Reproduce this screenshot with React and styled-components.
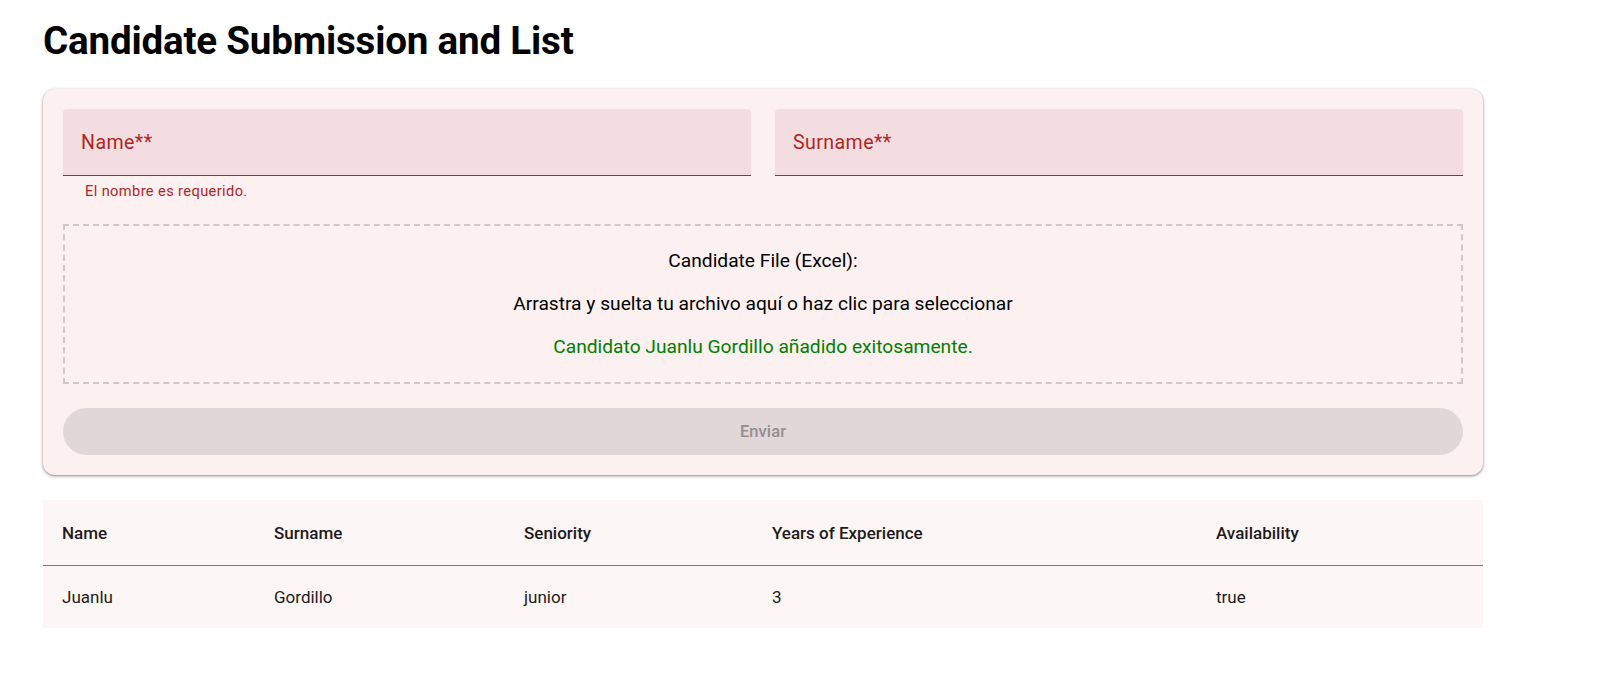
import React from 'react';
import styled, { createGlobalStyle } from 'styled-components';

const GlobalStyle = createGlobalStyle`
    body {
        margin: 0;
        background: #fff;
        font-family: Roboto, "Liberation Sans", sans-serif;
        color: #1d1b20;
    }
`;

const Page = styled.div`
    width: 1440px;
    padding: 16px 0 0 43px;
`;

const Title = styled.h1`
    margin: 0 0 23px;
    font-size: 38.6px;
    font-weight: 700;
    line-height: 50px;
    color: #000;
    letter-spacing: -0.2px;
`;

const Card = styled.form`
    background: #fdf0f0;
    border-radius: 12px;
    padding: 20px;
    display: flex;
    flex-direction: column;
    box-shadow: 0 1px 2px rgba(0, 0, 0, 0.3), 0 1px 3px 1px rgba(0, 0, 0, 0.15);
`;

const FieldRow = styled.div`
    display: grid;
    grid-template-columns: 1fr 1fr;
    gap: 24px;
`;

const FieldWrap = styled.div`
    display: flex;
    flex-direction: column;
`;

const Field = styled.div`
    height: 67px;
    background: #f3dde0;
    border-radius: 4px 4px 0 0;
    border-bottom: 1px solid #b3261e;
    display: flex;
    align-items: center;
    padding: 0 18px;
    box-sizing: border-box;
    font-size: 19.6px;
    letter-spacing: 0.4px;
    color: #b3261e;
`;

const Helper = styled.div`
    height: 26px;
    padding: 6px 0 0 22px;
    box-sizing: border-box;
    font-size: 14.6px;
    letter-spacing: 0.4px;
    color: #b3261e;
`;

const DropZone = styled.div`
    margin-top: 22px;
    height: 160px;
    border: 2px dashed #d0c7c8;
    box-sizing: border-box;
    display: flex;
    flex-direction: column;
    align-items: center;
    justify-content: center;
    gap: 21px;
    cursor: pointer;
`;

const DropText = styled.p`
    margin: 0;
    font-size: 19.2px;
    line-height: 22px;
    color: ${(p) => (p.$success ? '#008000' : '#000')};
`;

const SubmitButton = styled.button`
    margin-top: 24px;
    height: 47px;
    border: none;
    border-radius: 24px;
    background: #e1d6d8;
    color: #958d8f;
    font-family: inherit;
    font-size: 16.5px;
    font-weight: 500;
    letter-spacing: 0.1px;
`;

const Table = styled.table`
    margin-top: 25px;
    width: 100%;
    border-collapse: collapse;
    background: #fdf6f6;
    table-layout: fixed;
`;

const HeadCell = styled.th`
    height: 65px;
    padding: 0 0 0 19px;
    text-align: left;
    font-size: 17px;
    font-weight: 500;
    color: #1d1b20;
    border-bottom: 1px solid #857779;
    width: ${(p) => p.$w || 'auto'};
`;

const Cell = styled.td`
    height: 62px;
    padding: 0 0 0 19px;
    font-size: 17px;
    color: #1d1b20;
`;

const columns = [
    { label: 'Name', w: '193px' },
    { label: 'Surname', w: '231px' },
    { label: 'Seniority', w: '229px' },
    { label: 'Years of Experience', w: '425px' },
    { label: 'Availability' },
];

const candidates = [
    { name: 'Juanlu', surname: 'Gordillo', seniority: 'junior', years: 3, available: true },
];

export default function App() {
    return (
        <>
            <GlobalStyle />
            <Page>
                <Title>Candidate Submission and List</Title>
                <Card onSubmit={(e) => e.preventDefault()}>
                    <FieldRow>
                        <FieldWrap>
                            <Field>Name**</Field>
                            <Helper>El nombre es requerido.</Helper>
                        </FieldWrap>
                        <FieldWrap>
                            <Field>Surname**</Field>
                        </FieldWrap>
                    </FieldRow>
                    <DropZone>
                        <DropText>Candidate File (Excel):</DropText>
                        <DropText>Arrastra y suelta tu archivo aquí o haz clic para seleccionar</DropText>
                        <DropText $success>Candidato Juanlu Gordillo añadido exitosamente.</DropText>
                    </DropZone>
                    <SubmitButton type="submit" disabled>Enviar</SubmitButton>
                </Card>
                <Table>
                    <thead>
                        <tr>
                            {columns.map((c) => (
                                <HeadCell key={c.label} $w={c.w}>{c.label}</HeadCell>
                            ))}
                        </tr>
                    </thead>
                    <tbody>
                        {candidates.map((c) => (
                            <tr key={c.name}>
                                <Cell>{c.name}</Cell>
                                <Cell>{c.surname}</Cell>
                                <Cell>{c.seniority}</Cell>
                                <Cell>{c.years}</Cell>
                                <Cell>{String(c.available)}</Cell>
                            </tr>
                        ))}
                    </tbody>
                </Table>
            </Page>
        </>
    );
}
